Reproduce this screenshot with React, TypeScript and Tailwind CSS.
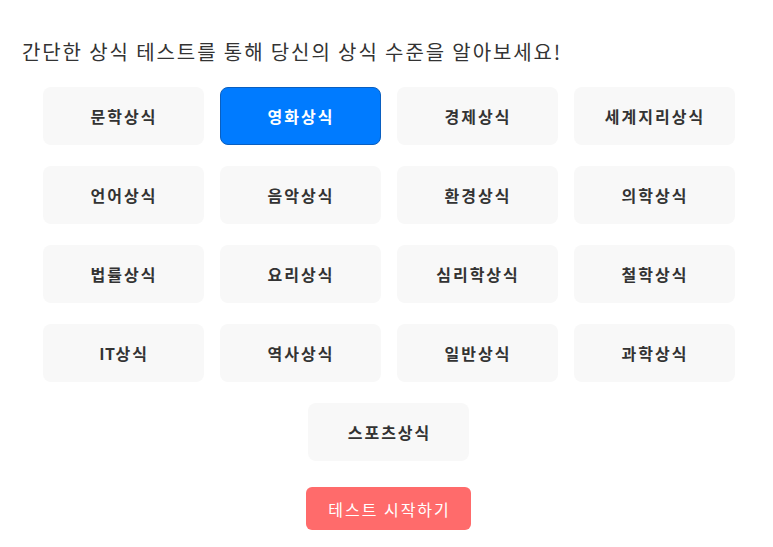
import React from "react";

const cats = [
  "문학상식", "영화상식", "경제상식", "세계지리상식",
  "언어상식", "음악상식", "환경상식", "의학상식",
  "법률상식", "요리상식", "심리학상식", "철학상식",
  "IT상식", "역사상식", "일반상식", "과학상식",
  "스포츠상식",
];

export default function App() {
  return (
    <div
      className="w-[773px] h-[547px] bg-white overflow-hidden"
      style={{ fontFamily: '"Noto Sans CJK KR", "Noto Sans", sans-serif' }}
    >
      <div className="pt-[38px] pl-[22px]">
        <h1 className="text-[20px] leading-[28px] font-normal text-[#333] tracking-[1.9px]">
          간단한 상식 테스트를 통해 당신의 상식 수준을 알아보세요!
        </h1>
      </div>
      <div className="ml-[42px] mt-[21px] w-[693px] flex flex-wrap justify-center gap-x-[16px] gap-y-[21px]">
        {cats.map((c) => {
          const sel = c === "영화상식";
          return (
            <div
              key={c}
              className={
                sel
                  ? "w-[161px] h-[58px] rounded-[8px] bg-[#007bff] border border-[#0a5fc0] flex items-center justify-center pl-[2px] text-white text-[16px] font-bold tracking-[2px]"
                  : "w-[161px] h-[58px] rounded-[8px] bg-[#f8f8f8] flex items-center justify-center pl-[2px] text-[#333] text-[16px] font-bold tracking-[2px]"
              }
            >
              {c === "IT상식" ? (
                <span>
                  <span className="tracking-[0.5px]">IT</span>상식
                </span>
              ) : (
                c
              )}
            </div>
          );
        })}
      </div>
      <div className="flex justify-center ml-[4px] mt-[26px]">
        <button className="w-[165px] h-[43px] rounded-[6px] bg-[#ff6b6b] pl-[2px] text-white text-[16px] font-normal tracking-[2px]">
          테스트 시작하기
        </button>
      </div>
    </div>
  );
}
